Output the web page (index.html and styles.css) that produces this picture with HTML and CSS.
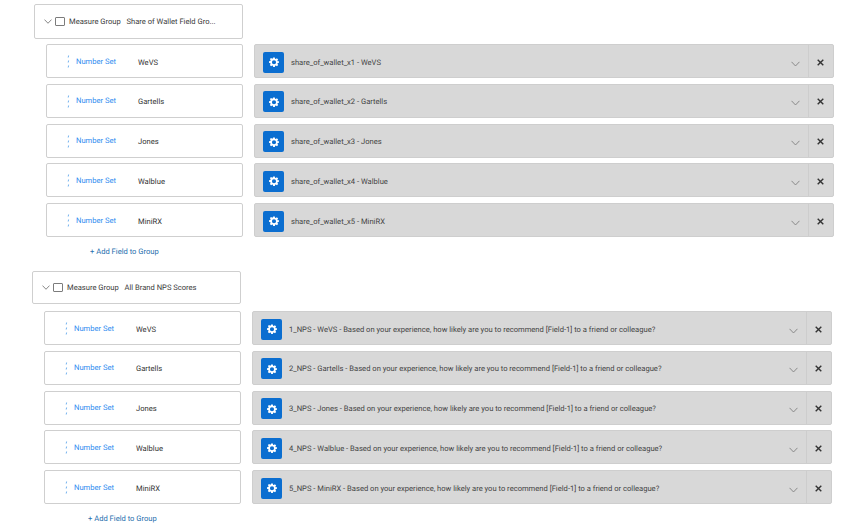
FILE: index.html
```html
<!DOCTYPE html>
<html lang="en">
<head>
<meta charset="utf-8">
<title>Measure Groups</title>
<link rel="stylesheet" href="styles.css">
</head>
<body>
<svg class="defs" width="0" height="0" aria-hidden="true">
  <symbol id="chev" viewBox="0 0 10 6"><path d="M.6.6 5 5.2 9.4.6" fill="none" stroke="currentColor" stroke-width="1"/></symbol>
  <symbol id="gear" viewBox="0 0 24 24"><path fill="#fff" fill-rule="evenodd" d="M10 1h4l.6 3.1 1.7.7 2.7-1.8 2.9 2.9-1.8 2.7.7 1.7L24 10v4l-3.1.6-.7 1.7 1.8 2.7-2.9 2.9-2.7-1.8-1.7.7L14 24h-4l-.6-3.1-1.7-.7L5 22l-2.9-2.9 1.8-2.7-.7-1.7L0 14v-4l3.2-.6.7-1.7L2.100 5 5 2.100l2.700 1.800 1.700-.7zM12 7.500a5 5 0 1 0 0 10 5 5 0 0 0 0-10z"/></symbol>
  <symbol id="close" viewBox="0 0 10 10"><path d="M1 1l8 8M9 1l-8 8" fill="none" stroke="currentColor" stroke-width="2"/></symbol>
  <symbol id="grip" viewBox="0 0 4 13"><path d="M2.600.5 2.200 2.500M2.600 5.500 2.200 7.500M2.600 10.500 2.200 12.500" fill="none" stroke="currentColor" stroke-width="1"/></symbol>
</svg>

<main class="page">
  <section class="group group-first">
    <header class="group-head">
      <svg class="chev"><use href="#chev"/></svg>
      <span class="check"></span>
      <span class="type">Measure Group</span>
      <span class="group-name">Share of Wallet Field Gro...</span>
    </header>
    <div class="rows">
      <div class="field"><svg class="grip"><use href="#grip"/></svg><span class="set">Number Set</span><span class="name">WeVS</span></div>
      <div class="map"><span class="tile"><svg class="gear"><use href="#gear"/></svg></span><span class="label">share_of_wallet_x1 - WeVS</span><svg class="arrow"><use href="#chev"/></svg><span class="remove"><svg class="x"><use href="#close"/></svg></span></div>
      <div class="field"><svg class="grip"><use href="#grip"/></svg><span class="set">Number Set</span><span class="name">Gartells</span></div>
      <div class="map"><span class="tile"><svg class="gear"><use href="#gear"/></svg></span><span class="label">share_of_wallet_x2 - Gartells</span><svg class="arrow"><use href="#chev"/></svg><span class="remove"><svg class="x"><use href="#close"/></svg></span></div>
      <div class="field"><svg class="grip"><use href="#grip"/></svg><span class="set">Number Set</span><span class="name">Jones</span></div>
      <div class="map"><span class="tile"><svg class="gear"><use href="#gear"/></svg></span><span class="label">share_of_wallet_x3 - Jones</span><svg class="arrow"><use href="#chev"/></svg><span class="remove"><svg class="x"><use href="#close"/></svg></span></div>
      <div class="field"><svg class="grip"><use href="#grip"/></svg><span class="set">Number Set</span><span class="name">Walblue</span></div>
      <div class="map"><span class="tile"><svg class="gear"><use href="#gear"/></svg></span><span class="label">share_of_wallet_x4 - Walblue</span><svg class="arrow"><use href="#chev"/></svg><span class="remove"><svg class="x"><use href="#close"/></svg></span></div>
      <div class="field"><svg class="grip"><use href="#grip"/></svg><span class="set">Number Set</span><span class="name">MiniRX</span></div>
      <div class="map"><span class="tile"><svg class="gear"><use href="#gear"/></svg></span><span class="label">share_of_wallet_x5 - MiniRX</span><svg class="arrow"><use href="#chev"/></svg><span class="remove"><svg class="x"><use href="#close"/></svg></span></div>
    </div>
    <div class="add">+ Add Field to Group</div>
  </section>

  <section class="group group-second">
    <header class="group-head">
      <svg class="chev"><use href="#chev"/></svg>
      <span class="check"></span>
      <span class="type">Measure Group</span>
      <span class="group-name">All Brand NPS Scores</span>
    </header>
    <div class="rows">
      <div class="field"><svg class="grip"><use href="#grip"/></svg><span class="set">Number Set</span><span class="name">WeVS</span></div>
      <div class="map"><span class="tile"><svg class="gear"><use href="#gear"/></svg></span><span class="label">1_NPS - WeVS - Based on your experience, how likely are you to recommend [Field-1] to a friend or colleague?</span><svg class="arrow"><use href="#chev"/></svg><span class="remove"><svg class="x"><use href="#close"/></svg></span></div>
      <div class="field"><svg class="grip"><use href="#grip"/></svg><span class="set">Number Set</span><span class="name">Gartells</span></div>
      <div class="map"><span class="tile"><svg class="gear"><use href="#gear"/></svg></span><span class="label">2_NPS - Gartells - Based on your experience, how likely are you to recommend [Field-1] to a friend or colleague?</span><svg class="arrow"><use href="#chev"/></svg><span class="remove"><svg class="x"><use href="#close"/></svg></span></div>
      <div class="field"><svg class="grip"><use href="#grip"/></svg><span class="set">Number Set</span><span class="name">Jones</span></div>
      <div class="map"><span class="tile"><svg class="gear"><use href="#gear"/></svg></span><span class="label">3_NPS - Jones - Based on your experience, how likely are you to recommend [Field-1] to a friend or colleague?</span><svg class="arrow"><use href="#chev"/></svg><span class="remove"><svg class="x"><use href="#close"/></svg></span></div>
      <div class="field"><svg class="grip"><use href="#grip"/></svg><span class="set">Number Set</span><span class="name">Walblue</span></div>
      <div class="map"><span class="tile"><svg class="gear"><use href="#gear"/></svg></span><span class="label">4_NPS - Walblue - Based on your experience, how likely are you to recommend [Field-1] to a friend or colleague?</span><svg class="arrow"><use href="#chev"/></svg><span class="remove"><svg class="x"><use href="#close"/></svg></span></div>
      <div class="field"><svg class="grip"><use href="#grip"/></svg><span class="set">Number Set</span><span class="name">MiniRX</span></div>
      <div class="map"><span class="tile"><svg class="gear"><use href="#gear"/></svg></span><span class="label">5_NPS - MiniRX - Based on your experience, how likely are you to recommend [Field-1] to a friend or colleague?</span><svg class="arrow"><use href="#chev"/></svg><span class="remove"><svg class="x"><use href="#close"/></svg></span></div>
    </div>
    <div class="add">+ Add Field to Group</div>
  </section>
</main>
</body>
</html>
```

FILE: styles.css
```css
* { box-sizing: border-box; }
html, body { margin: 0; height: 530px; overflow: hidden; background: #fff; }
body {
  font-family: Roboto, "Liberation Sans", sans-serif; font-size: 7.6px; color: #3b3b3b;
  text-rendering: geometricPrecision;
}
.defs { position: absolute; }
.page { display: flex; flex-direction: column; padding-top: 4px; }
.group { display: flex; flex-direction: column; }
.group-first { padding-left: 34px; width: 834px; }
.group-second { margin-top: 13px; padding-left: 32px; width: 832px; }
.group-head {
  width: 209px; height: 35px; display: flex; align-items: center; padding-left: 9px;
  border: 1px solid #cfcfcf; border-radius: 2px; background: #fff;
}
.group-second .group-head { height: 33px; }
.chev { width: 8px; height: 5px; color: #6a6a6a; flex: none; }
.check { width: 10px; height: 9px; margin-left: 2.500px; border: 1px solid #7c7c7c; border-radius: 1px; flex: none; }
.type { margin-left: 4.500px; width: 57.500px; flex: none; white-space: nowrap; }
.group-name { white-space: nowrap; }
.rows {
  display: grid; grid-template-columns: 197px 580px; column-gap: 11px;
  grid-auto-rows: 34px; row-gap: 5.75px; margin: 5px 0 0 12px;
}
.group-second .rows { margin-top: 7px; }
.field {
  display: flex; align-items: center; padding: 2px 0 0 19px;
  border: 1px solid #cfcfcf; border-radius: 2px; background: #fff;
}
.grip { width: 4px; height: 13px; color: #6fb0ee; flex: none; margin-top: -1px; }
.set { margin-left: 6px; width: 62px; flex: none; color: #2f8cf0; position: relative; bottom: 1px; white-space: nowrap; }
.name { white-space: nowrap; color: #333; }
.map {
  display: flex; align-items: center; padding: 2px 0 0 8px;
  background: #d8d8d8; border: 1px solid #cecece; border-radius: 2px;
}
.tile {
  width: 21px; height: 21px; flex: none; display: flex; align-items: center; justify-content: center;
  background: #0b6ed0; border-radius: 2px;
}
.gear { width: 10px; height: 10px; }
.label { margin-left: 7px; flex: 1; white-space: nowrap; color: #444; }
.arrow { width: 9px; height: 6px; margin: 3px 8px 0 0; color: #808080; flex: none; }
.remove {
  width: 25px; align-self: stretch; flex: none; display: flex; align-items: center; justify-content: center;
  border-left: 1px solid #cdcdcd; margin-top: -2px;
}
.x { width: 7px; height: 7px; color: #333; margin: 2px 1px 0 0; }
.add { margin: 9px 0 0 56px; height: 12px; line-height: 12px; color: #1f6fae; white-space: nowrap; }
.group-second .add { margin-top: 8.500px; }
```
